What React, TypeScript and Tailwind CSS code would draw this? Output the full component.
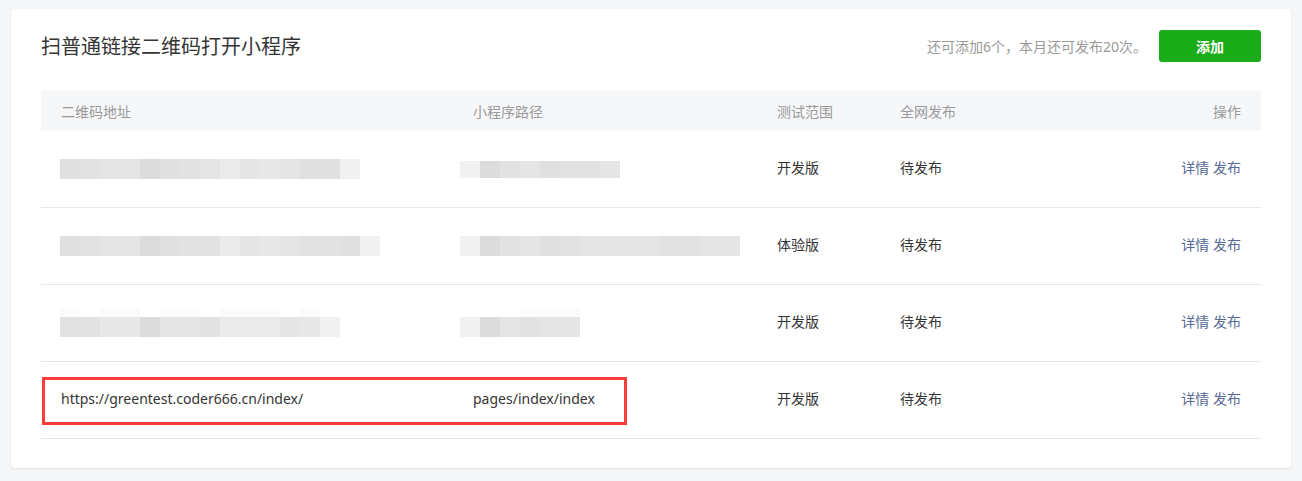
import React from 'react'

const shade: Record<string, string> = {
    a: 'bg-[#dcdcdc]',
    b: 'bg-[#e0e0e0]',
    c: 'bg-[#e2e2e2]',
    d: 'bg-[#e5e5e5]',
    e: 'bg-[#e8e8e8]',
    f: 'bg-[#ebebeb]',
    g: 'bg-[#f1f1f1]',
    h: 'bg-[#fbfbfb]',
}

function Mosaic({ cells, tall = true, faint }: { cells: string; tall?: boolean; faint?: string }) {
    return (
        <div className="flex flex-col">
            {faint && (
                <div className="flex h-[8px]">
                    {faint.split('').map((c, i) => (
                        <div key={i} className={`w-[20px] h-full ${c === '.' ? '' : shade[c]}`} />
                    ))}
                </div>
            )}
            <div className={`flex ${tall ? 'h-[20px]' : 'h-[17px]'}`}>
                {cells.split('').map((c, i) => (
                    <div key={i} className={`w-[20px] h-full ${shade[c]}`} />
                ))}
            </div>
        </div>
    )
}

type Row = {
    url: React.ReactNode
    path: React.ReactNode
    scope: string
}

const rows: Row[] = [
    {
        url: <Mosaic cells="bcddabcdfdedbbg" />,
        path: <Mosaic cells="gacdbccd" tall={false} />,
        scope: '开发版',
    },
    {
        url: <Mosaic cells="bcddabccfdedccbg" />,
        path: <Mosaic cells="gacdbcddddccdd" />,
        scope: '体验版',
    },
    {
        url: <Mosaic cells="cceeaddcfffdeg" faint="h.hh.hh.hhh.h." />,
        path: <Mosaic cells="gadcdd" faint="...hhh" />,
        scope: '开发版',
    },
]

const cols = 'grid grid-cols-[412px_304px_123px_1fr_200px]'

export default function App() {
    return (
        <div
            className="min-h-screen bg-[#f6f7f9] py-[9px] px-[11px]"
            style={{ fontFamily: '"Noto Sans", "Noto Sans CJK SC", sans-serif' }}
        >
            <div className="bg-white rounded-[4px] shadow-[0_1px_2px_rgba(0,0,0,0.1)] px-[30px] pt-[21px] pb-[29px]">
                <div className="flex items-center justify-between h-[32px]">
                    <h1 className="text-[20px] text-[#353535] font-normal leading-none pt-[2px]">扫普通链接二维码打开小程序</h1>
                    <div className="flex items-center gap-[12px]">
                        <span className="text-[14px] text-[#9a9a9a]">还可添加6个，本月还可发布20次。</span>
                        <button className="w-[102px] h-[32px] rounded-[3px] bg-[#1aad19] text-white text-[14px] font-bold">
                            添加
                        </button>
                    </div>
                </div>

                <div className="mt-[29px] text-[14px]">
                    <div className={`${cols} h-[40px] items-center bg-[#f6f7f9] text-[#9a9a9a]`}>
                        <div className="pl-[20px]">二维码地址</div>
                        <div className="pl-[20px]">小程序路径</div>
                        <div className="pl-[20px]">测试范围</div>
                        <div className="pl-[20px]">全网发布</div>
                        <div className="pr-[20px] text-right">操作</div>
                    </div>

                    {rows.map((r, i) => (
                        <div
                            key={i}
                            className={`${cols} h-[77px] items-center border-b border-[#e7e7eb] text-[#353535]`}
                        >
                            <div className="pl-[19px]">{r.url}</div>
                            <div className="pl-[7px]">{r.path}</div>
                            <div className="pl-[20px] pb-[3px]">{r.scope}</div>
                            <div className="pl-[20px] pb-[3px]">待发布</div>
                            <div className="pr-[20px] pb-[3px] text-right text-[#576b95]">详情 发布</div>
                        </div>
                    ))}

                    <div className={`relative ${cols} h-[77px] items-center border-b border-[#e7e7eb] text-[#353535]`}>
                        <div className="absolute left-[1px] top-[15px] w-[585px] h-[48px] border-[3px] border-[#fc3b3b]" />
                        <div className="pl-[20px] pb-[3px]">https://greentest.coder666.cn/index/</div>
                        <div className="pl-[20px] pb-[3px]">pages/index/index</div>
                        <div className="pl-[20px] pb-[3px]">开发版</div>
                        <div className="pl-[20px] pb-[3px]">待发布</div>
                        <div className="pr-[20px] pb-[3px] text-right text-[#576b95]">详情 发布</div>
                    </div>
                </div>
            </div>
        </div>
    )
}
